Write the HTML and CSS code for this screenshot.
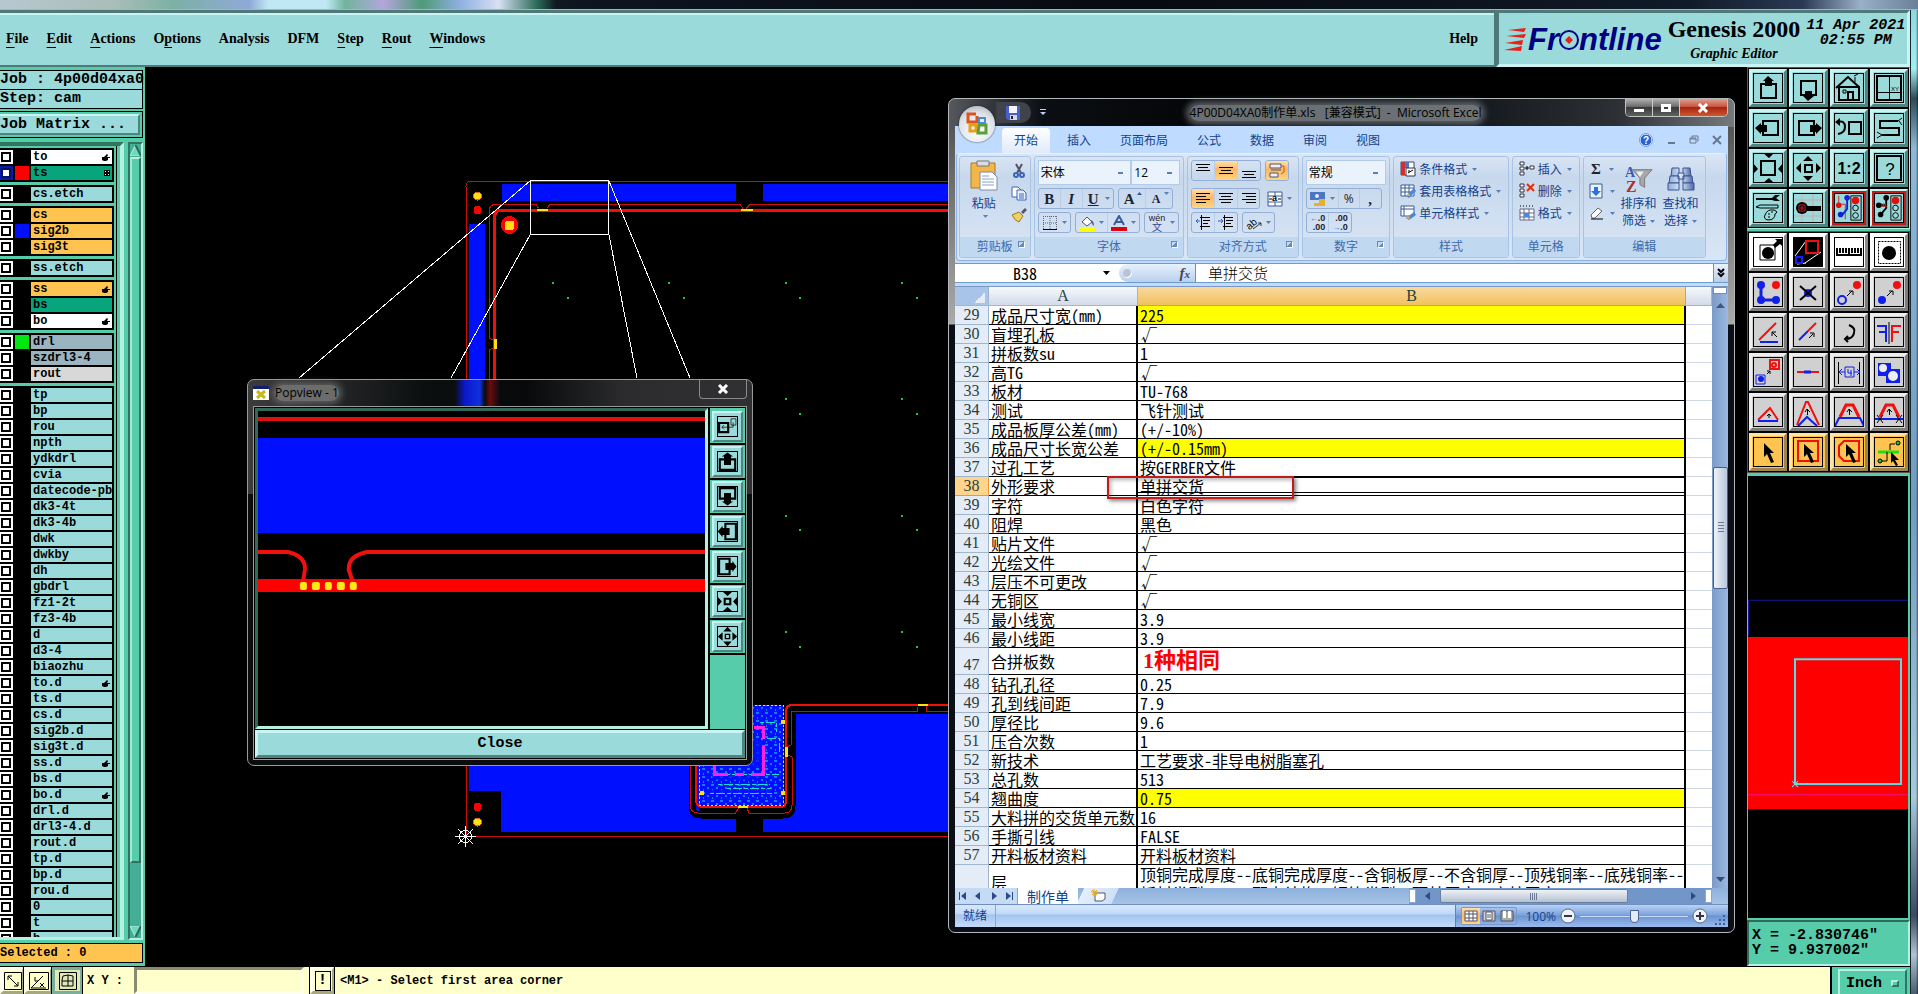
FILE: index.html
```html
<!DOCTYPE html>
<html lang="zh-CN">
<head>
<meta charset="utf-8">
<title>Genesis 2000 Graphic Editor</title>
<link rel="stylesheet" href="styles.css">
</head>
<body>
<svg class="defs" aria-hidden="true">
  <defs>
    <pattern id="dots" width="9" height="8" patternUnits="userSpaceOnUse"><path d="M0 1h3M5 4h2M1 6h1" stroke="#2fe0e8" stroke-width="1"/></pattern>
    <linearGradient id="steel" x1="0" x2="1"><stop offset="0" stop-color="#8fa9d8"/><stop offset=".5" stop-color="#dfe9fa"/><stop offset="1" stop-color="#4a69a8"/></linearGradient>
  </defs>
  <symbol id="hand" viewBox="0 0 8 8"><path d="M0 4h2l3-3 1 1-1 2h3v1H6v2L4 8H2L0 7z"/></symbol>
  <symbol id="up" viewBox="0 0 30 30"><path d="M8 11h15v14H8z" fill="none" stroke="#000" stroke-width="2"/><path d="M15 3l6 5h-2v5h-7V8h-2z"/></symbol>
  <symbol id="down" viewBox="0 0 30 30"><path d="M8 8h15v14H8z" fill="none" stroke="#000" stroke-width="2"/><path d="M15 28l6-5h-2v-5h-7v5h-2z"/></symbol>
  <symbol id="left" viewBox="0 0 30 30"><path d="M10 8h15v14H10z" fill="none" stroke="#000" stroke-width="2"/><path d="M2 15l6-5v2h6v7H8v2z"/></symbol>
  <symbol id="right" viewBox="0 0 30 30"><path d="M6 8h15v14H6z" fill="none" stroke="#000" stroke-width="2"/><path d="M29 15l-6-5v2h-6v7h6v2z"/></symbol>
  <symbol id="in" viewBox="0 0 30 30"><path d="M8 8h14v14H8z" fill="none" stroke="#000" stroke-width="2"/><path d="M10 0h11l-5 5zM10 30h11l-5-5zM0 10v11l5-5zM30 10v11l-5-5z"/></symbol>
  <symbol id="out" viewBox="0 0 30 30"><path d="M12 12h7v7h-7z" fill="none" stroke="#000" stroke-width="2"/><path d="M10 8l5-5 5 5zM10 23l5 5 5-5zM8 10l-5 5 5 5zM23 10l5 5-5 5z"/></symbol>
  <symbol id="cursor" viewBox="0 0 30 30"><path d="M11 6v14l3-3 4 9 3-1-4-9h4z"/></symbol>
  <symbol id="dd" viewBox="0 0 5 3"><path d="M0 0h5L2.500 3z" fill="#5a7fb5"/></symbol>
</svg>
<div class="app">
  <div class="oscap"></div>
  <div class="body">
    <div class="work">
      <header class="head">
        <nav class="menu">
          <a href="#"><u>F</u>ile</a><a href="#"><u>E</u>dit</a><a href="#"><u>A</u>ctions</a><a href="#">O<u>p</u>tions</a><a href="#">Analysis</a><a href="#">DFM</a><a href="#"><u>S</u>tep</a><a href="#"><u>R</u>out</a><a href="#"><u>W</u>indows</a><a href="#" class="help">Help</a>
        </nav>
        <div class="brand">
          <div class="logo">
            <svg width="24" height="24" viewBox="0 0 24 24" fill="#e8201c"><path d="M4 2L22 0l-2 4zM2 8l20-2-2 4zM1 15l18-3-1 5zM0 22l18-4-1 5z"/></svg>
            <span>Fr</span><svg width="20" height="20" viewBox="0 0 20 20"><circle cx="10" cy="10" r="9" fill="none" stroke="#000080" stroke-width="2"/><path d="M10 6l4 4-4 4-4-4z" fill="#e8201c"/></svg><span>ntline</span>
          </div>
          <div class="prod"><strong>Genesis 2000</strong><em>Graphic Editor</em></div>
          <div class="clock">11 Apr 2021<br>02:55 PM</div>
        </div>
      </header>
      <div class="main">
        <aside class="layers">
          <div class="jobbox">Job : 4p00d04xa0</div>
          <div class="jobbox">Step: cam</div>
          <div class="matrix"><button>Job Matrix ...</button></div>
          <div class="lscroll">
            <div class="lwin">
              <ul><li><label><input type="checkbox"><i></i><b class="w">to<svg><use href="#hand"/></svg></b></label></li><li><label><input type="checkbox" class="on"><i class="red"></i><b class="g">ts<svg class="mk" viewBox="0 0 6 6"><path d="M0 0h6v6H0z"/><path d="M1 1h1v1H1zM4 1h1v1H4zM1 4h1v1H1zM4 4h1v1H4z" fill="#fff"/></svg></b></label></li></ul>
              <ul><li><label><input type="checkbox"><i></i><b>cs.etch</b></label></li></ul>
              <ul><li><label><input type="checkbox"><i></i><b class="o">cs</b></label></li><li><label><input type="checkbox"><i class="blue"></i><b class="o">sig2b</b></label></li><li><label><input type="checkbox"><i></i><b class="o">sig3t</b></label></li></ul>
              <ul><li><label><input type="checkbox"><i></i><b>ss.etch</b></label></li></ul>
              <ul><li><label><input type="checkbox"><i></i><b class="o">ss<svg><use href="#hand"/></svg></b></label></li><li><label><input type="checkbox"><i></i><b class="g">bs</b></label></li><li><label><input type="checkbox"><i></i><b class="w">bo<svg><use href="#hand"/></svg></b></label></li></ul>
              <ul><li><label><input type="checkbox"><i class="lime"></i><b class="s">drl</b></label></li><li><label><input type="checkbox"><i></i><b class="s">szdrl3-4</b></label></li><li><label><input type="checkbox"><i></i><b class="l">rout</b></label></li></ul>
              <ul>
                <li><label><input type="checkbox"><i></i><b>tp</b></label></li>
                <li><label><input type="checkbox"><i></i><b>bp</b></label></li>
                <li><label><input type="checkbox"><i></i><b>rou</b></label></li>
                <li><label><input type="checkbox"><i></i><b>npth</b></label></li>
                <li><label><input type="checkbox"><i></i><b>ydkdrl</b></label></li>
                <li><label><input type="checkbox"><i></i><b>cvia</b></label></li>
                <li><label><input type="checkbox"><i></i><b>datecode-pbc</b></label></li>
                <li><label><input type="checkbox"><i></i><b>dk3-4t</b></label></li>
                <li><label><input type="checkbox"><i></i><b>dk3-4b</b></label></li>
                <li><label><input type="checkbox"><i></i><b>dwk</b></label></li>
                <li><label><input type="checkbox"><i></i><b>dwkby</b></label></li>
                <li><label><input type="checkbox"><i></i><b>dh</b></label></li>
                <li><label><input type="checkbox"><i></i><b>gbdrl</b></label></li>
                <li><label><input type="checkbox"><i></i><b>fz1-2t</b></label></li>
                <li><label><input type="checkbox"><i></i><b>fz3-4b</b></label></li>
                <li><label><input type="checkbox"><i></i><b>d</b></label></li>
                <li><label><input type="checkbox"><i></i><b>d3-4</b></label></li>
                <li><label><input type="checkbox"><i></i><b>biaozhu</b></label></li>
                <li><label><input type="checkbox"><i></i><b>to.d<svg><use href="#hand"/></svg></b></label></li>
                <li><label><input type="checkbox"><i></i><b>ts.d</b></label></li>
                <li><label><input type="checkbox"><i></i><b>cs.d</b></label></li>
                <li><label><input type="checkbox"><i></i><b>sig2b.d</b></label></li>
                <li><label><input type="checkbox"><i></i><b>sig3t.d</b></label></li>
                <li><label><input type="checkbox"><i></i><b>ss.d<svg><use href="#hand"/></svg></b></label></li>
                <li><label><input type="checkbox"><i></i><b>bs.d</b></label></li>
                <li><label><input type="checkbox"><i></i><b>bo.d<svg><use href="#hand"/></svg></b></label></li>
                <li><label><input type="checkbox"><i></i><b>drl.d</b></label></li>
                <li><label><input type="checkbox"><i></i><b>drl3-4.d</b></label></li>
                <li><label><input type="checkbox"><i></i><b>rout.d</b></label></li>
                <li><label><input type="checkbox"><i></i><b>tp.d</b></label></li>
                <li><label><input type="checkbox"><i></i><b>bp.d</b></label></li>
                <li><label><input type="checkbox"><i></i><b>rou.d</b></label></li>
                <li><label><input type="checkbox"><i></i><b>0</b></label></li>
                <li><label><input type="checkbox"><i></i><b>t</b></label></li>
                <li><label><input type="checkbox"><i></i><b>h</b></label></li>
              </ul>
            </div>
            <div class="lbar">
              <svg width="11" height="11" viewBox="0 0 11 11"><path d="M5.500 0L11 11H0z" fill="#6fd8bc" stroke="#b5f0e0"/><path d="M5.500 0L11 11" stroke="#2a6655" stroke-width="2"/></svg>
              <div class="lthumb"></div>
              <svg width="11" height="11" viewBox="0 0 11 11"><path d="M5.500 11L11 0H0z" fill="#6fd8bc" stroke="#b5f0e0"/><path d="M5.500 11L11 0" stroke="#2a6655" stroke-width="2"/></svg>
            </div>
          </div>
          <div class="selected">Selected : 0</div>
        </aside>

        <main class="canvas">
          <svg class="pcb" viewBox="145 67 1602 899" preserveAspectRatio="xMinYMin slice">
            <g fill="#0010ff">
              <path d="M502 184h234v17H502zM763 184h240v17H763zM469 224h16v410h-16zM469 700h230v116h37v16H501v-41h-32zM795 714h205v118H763v-16h25q7-2 7-12z"/>
            </g>
            <path d="M692 700v106q0 9 9 9h82q9 0 9-9V711" fill="none" stroke="#000" stroke-width="7"/>
            <g fill="none" stroke="#c81008">
              <path d="M1000 181.500H470q-4 0-4 5V836.500h540"/>
              <path d="M489.500 400v-50l3-2M489.500 210q0-6 8-6h38l3 4M489.500 210v128l3 2M1000 204.500H750l-4 4M547 208l3-3.500h190l3 4"/>
              <path d="M690.500 760v46q0 7 8 7h37l3-5M747 808l2 5h36q7 0 7-8v-48l-4-2M787 747l4-2v-34h126v-4M926 705v6h40"/>
            </g>
            <g fill="none" stroke="#f01008" stroke-width="3">
              <path d="M494.500 400V218q0-8 7-8H1000" stroke-width="3"/>
              <path d="M696 760v40q0 7 8 7h76q6 0 6-7v-88q0-7 6-7h210" stroke-width="2"/>
            </g>
            <path d="M699 705h85v101h-85z" fill="#0010ff"/>
            <path d="M699 705h85v101h-85z" fill="url(#dots)"/>
            <path d="M704 740h60v28h-60zM712 774h48v6h-48zM706 790h66v4h-66z" fill="#0010ff" opacity=".7"/>
            <path d="M715 774h64M718 784h52M710 793h62M760 722h16v10M761 738h18v16M727 788h44" stroke="#18e0d0" fill="none" stroke-dasharray="4 2 9 2"/>
            <path d="M699.500 705v101M783.500 705v101M699 705.500h85M699 805.500h85" stroke="#7ff" stroke-dasharray="2 2"/>
            <path d="M754 727h9v12M763 745v29h-12M714 762v12h14M735 774h9" stroke="#ff20e8" stroke-width="3" fill="none"/>
            <g fill="#ffe010"><path d="M537 209h11v2h-11zM741 209h12v2h-12zM494 339h3v10h-3zM785 747h3v10h-3zM738 806h10v2h-10zM918 704h10v2h-10zM781 720h4v4h-4zM700 791h4v4h-4zM781 791h4v4h-4z"/></g>
            <ellipse cx="509.500" cy="225" rx="8.500" ry="9" fill="#f00"/><rect x="505" y="221" width="9" height="9" rx="2" fill="#ffe010"/>
            <g fill="#ffe010" stroke="#f06010"><circle cx="477.500" cy="196" r="4"/><circle cx="477.500" cy="822" r="4"/></g>
            <g fill="#f00"><circle cx="477.500" cy="210" r="4"/><circle cx="477.500" cy="807" r="4"/></g>
            <g fill="#20c840"><path d="M552 282h2v2h-2zM567 297h2v2h-2zM668 282h2v2h-2zM683 297h2v2h-2zM785 282h2v2h-2zM799 297h2v2h-2zM901 282h2v2h-2zM916 297h2v2h-2zM785 398h2v2h-2zM799 413h2v2h-2zM901 398h2v2h-2zM916 413h2v2h-2zM785 515h2v2h-2zM799 529h2v2h-2zM901 515h2v2h-2zM916 529h2v2h-2zM785 631h2v2h-2zM799 646h2v2h-2zM901 631h2v2h-2zM916 646h2v2h-2z"/></g>
            <path d="M530.500 180.500h78v54h-78zM530 181L299 378M530 235L451 378M609 235l28 143M609 181l81 197" fill="none" stroke="#fff"/>
            <g stroke="#fff" fill="none"><circle cx="465.500" cy="836.500" r="6"/><path d="M455 836.500h21M465.500 826v21M458 829l15 15M473 829l-15 15"/></g>
          </svg>

          <section class="pop">
            <div class="ptitle"><svg width="16" height="14" viewBox="0 0 16 14"><path d="M0 0h16v14H0z" fill="#fff"/><path d="M0 0h16v3H0z" fill="#102070"/><path d="M4 5l8 7M12 5l-8 7" stroke="#c8b820" stroke-width="3"/></svg><span>Popview - 1</span><button aria-label="Close"><svg width="12" height="10" viewBox="0 0 12 10"><path d="M2 1l8 8M10 1L2 9" stroke="#fff" stroke-width="3"/></svg></button></div>
            <div class="pin">
              <div class="prow">
                <div class="pview">
                  <svg viewBox="257 411 448 315" preserveAspectRatio="none"><path d="M257 417h448v4H257z" fill="#e01010"/><path d="M257 438h448v95H257z" fill="#0010ff"/><path d="M257 579h448v13H257z" fill="#f00"/><path d="M257 552h30q18 4 17 18l-2 12M705 552H366q-19 4-18 18l4 12" fill="none" stroke="#f01010" stroke-width="4"/><g fill="#ffe818"><rect x="299" y="582" width="7" height="8" rx="2"/><rect x="311" y="582" width="8" height="8" rx="2"/><rect x="324" y="582" width="7" height="8" rx="2"/><rect x="336" y="582" width="8" height="8" rx="2"/><rect x="349" y="582" width="7" height="8" rx="2"/></g></svg>
                </div>
                <div class="ptools">
                  <button aria-label="Link"><svg viewBox="0 0 30 30"><path d="M3 10h13v13H3z" fill="none" stroke="#000" stroke-width="3"/><path d="M20 4h7v9h-7zM7 16h16v-7M10 13l-3 3 3 3" fill="none" stroke="#000"/></svg></button>
                  <button aria-label="Up"><svg viewBox="0 0 30 30"><path d="M4 12h22v15H4z" fill="none" stroke="#000" stroke-width="3"/><path d="M15 2l8 6h-3v12H10V8H7z"/></svg></button>
                  <button aria-label="Down"><svg viewBox="0 0 30 30"><path d="M4 3h22v15H4z" fill="none" stroke="#000" stroke-width="3"/><path d="M15 28l8-6h-3V10H10v12H7z"/></svg></button>
                  <button aria-label="Left"><svg viewBox="0 0 30 30"><path d="M12 4h15v22H12z" fill="none" stroke="#000" stroke-width="3"/><path d="M1 15l7-8v3h10v10H8v3z"/></svg></button>
                  <button aria-label="Right"><svg viewBox="0 0 30 30"><path d="M3 4h15v22H3z" fill="none" stroke="#000" stroke-width="3"/><path d="M28 15l-6-8v3H12v10h10v3z"/></svg></button>
                  <button aria-label="Zoom in"><svg viewBox="0 0 30 30"><path d="M11 11h8v8h-8z" fill="none" stroke="#000" stroke-width="3"/><path d="M7 0h16l-8 7zM7 30h16l-8-7zM0 7v16l7-8zM30 7v16l-7-8z"/></svg></button>
                  <button aria-label="Zoom out"><svg viewBox="0 0 30 30"><path d="M12 12h6v6h-6z" fill="none" stroke="#000" stroke-width="2"/><path d="M9 8l6-7 6 7zM9 22l6 7 6-7zM8 9l-7 6 7 6zM22 9l7 6-7 6z"/></svg></button>
                </div>
              </div>
              <button class="pclose">Close</button>
            </div>
          </section>

          <section class="xl">
            <div class="xtitle">
              <div class="qat"><svg width="14" height="14" viewBox="0 0 14 14"><path d="M0 0h14v14H2l-2-2z" fill="#4a5fc8"/><path d="M3 0h8v7H3z" fill="#f4f6ff"/><path d="M4 9h7v5H4z" fill="#cfd6ee"/><path d="M5 10h2v3H5z" fill="#223"/></svg></div>
              <svg class="qdd" width="6" height="7" viewBox="0 0 6 7"><path d="M0 0h6v1H0zM0 3h6L3 6z" fill="#b8cdf0"/></svg>
              <h1>4P00D04XA0制作单.xls&nbsp;&nbsp; [兼容模式]&nbsp; -&nbsp; Microsoft Excel</h1>
              <div class="wbtn"><button aria-label="Minimize"><svg width="12" height="10" viewBox="0 0 12 10"><path d="M1 6h10v3H1z" fill="#fff"/></svg></button><button aria-label="Maximize"><svg width="12" height="10" viewBox="0 0 12 10"><path d="M1 1h10v8H1zM4 4v2h4V4z" fill="#fff" fill-rule="evenodd"/></svg></button><button class="x" aria-label="Close"><svg width="12" height="10" viewBox="0 0 12 10"><path d="M2 1l8 8M10 1L2 9" stroke="#fff" stroke-width="3"/></svg></button></div>
            </div>
            <button class="orb" aria-label="Office"><svg width="22" height="24" viewBox="0 0 22 24" fill="none" stroke-width="3"><path d="M11 4v6H2V2h8" stroke="#e0521c"/><path d="M13 6h6v5h-6z" stroke="#4a90d0" stroke-width="2"/><path d="M4 13h6v6H4z" stroke="#e8a018"/><path d="M13 13h7v8h-8z" stroke="#5aa038"/></svg></button>
            <div class="xin">
              <nav class="tabs"><a href="#" class="act">开始</a><a href="#">插入</a><a href="#">页面布局</a><a href="#">公式</a><a href="#">数据</a><a href="#">审阅</a><a href="#">视图</a>
                <span class="mdi"><svg width="14" height="14" viewBox="0 0 14 14"><circle cx="7" cy="7" r="6" fill="#2a62d8" stroke="#fff"/><circle cx="7" cy="7" r="6.500" fill="none" stroke="#7a9ad8"/><text x="4" y="11" font-size="10" font-weight="bold" fill="#fff" font-family="Liberation Sans">?</text></svg><svg width="10" height="10" viewBox="0 0 10 10"><path d="M2 7h7v2H2z" fill="#68788f"/></svg><svg width="10" height="10" viewBox="0 0 10 10" fill="none" stroke="#68788f"><path d="M3 3V1h6v5H8M1 3h6v5H1zM1 4h6"/></svg><svg width="10" height="10" viewBox="0 0 10 10"><path d="M1 1l8 8M9 1L1 9" stroke="#68788f" stroke-width="2"/></svg></span>
              </nav>
              <div class="ribbon">
                <div class="grp"><div class="gb clip">
                  <button class="big"><svg width="28" height="32" viewBox="0 0 28 32"><path d="M1 3h24v25H1z" fill="#f2b64a" stroke="#b07a20"/><path d="M7 1h12v5H7z" fill="#d8dce4" stroke="#777"/><path d="M10 12h12l5 5v13H10z" fill="#fff" stroke="#7a8aa8"/><path d="M12 19h12M12 22h12M12 25h12M12 16h7" stroke="#8aa0c8"/></svg>粘贴<svg class="dd"><use href="#dd"/></svg></button>
                  <div class="col"><svg viewBox="0 0 16 16"><path d="M5 1l5 9M11 1L6 10" stroke="#556" stroke-width="2"/><g fill="none" stroke="#3a66b8" stroke-width="2"><circle cx="5" cy="12" r="2"/><circle cx="11" cy="12" r="2"/></g></svg><svg viewBox="0 0 16 16"><path d="M1 2h6l3 3v7H1z" fill="#fff" stroke="#3a66b8"/><path d="M6 5h6l3 3v7H6z" fill="#e8f0ff" stroke="#3a66b8"/><path d="M8 9h5M8 11h5M8 13h5" stroke="#3a66b8"/></svg><svg viewBox="0 0 16 16"><path d="M10 5l4-4 2 2-4 4z" fill="#556"/><path d="M1 8l7-3 4 4-4 6q-4-1-7-7z" fill="#f0d060" stroke="#a07820"/></svg></div>
                </div><div class="gl">剪贴板<span class="lx"></span></div></div>
                <div class="grp"><div class="gb rows">
                  <div class="r"><select class="f1" aria-label="字体"><option>宋体</option></select><select class="f2" aria-label="字号"><option>12</option></select></div>
                  <div class="r"><span class="bs"><button><b class="t">B</b></button><button><i class="t">I</i></button><button><u class="t">U</u><svg class="dd"><use href="#dd"/></svg></button></span><span class="bs"><button><b class="t a">A</b><svg class="sup" viewBox="0 0 5 3"><path d="M0 3h5L2.500 0z" fill="#2a5ab8"/></svg></button><button><b class="t b">A</b><svg class="sup"><use href="#dd"/></svg></button></span></div>
                  <div class="r"><span class="bs"><button><svg viewBox="0 0 16 16"><path d="M1 1.500h14M1 8h14M1.500 1v13M8 1v13M14.500 1v13" stroke="#667" stroke-dasharray="1 1"/><path d="M1 14h14v1H1z"/></svg><svg class="dd"><use href="#dd"/></svg></button></span><span class="bs"><button><svg viewBox="0 0 16 16"><path d="M3 7l5-5 5 5-5 4z" fill="#fff" stroke="#556"/><path d="M12 5q3 1 3 6l-2-2z" fill="#3a66b8"/><path d="M0 12h16v4H0z" fill="#ff0"/></svg><svg class="dd"><use href="#dd"/></svg></button><button><svg viewBox="0 0 16 16"><path d="M3 10L8 1l5 9M5 7h6" fill="none" stroke="#3a5a9a" stroke-width="2"/><path d="M0 12h16v4H0z" fill="#e00010"/></svg><svg class="dd"><use href="#dd"/></svg></button></span><span class="bs"><button><svg class="wen" viewBox="0 0 18 18" text-anchor="middle" fill="#223"><text x="9" y="7" font-size="9" font-family="Liberation Sans">wén</text><text x="9" y="17" font-size="10" font-family="Noto Sans CJK SC" fill="#2a4a9a">文</text></svg><svg class="dd"><use href="#dd"/></svg></button></span></div>
                </div><div class="gl">字体<span class="lx"></span></div></div>
                <div class="grp"><div class="gb rows">
                  <div class="r"><span class="bs"><button><svg viewBox="0 0 16 16"><path d="M1 1h14v1H1zM3 4h10v1H3zM1 7h14v1H1z"/></svg></button><button class="hot"><svg viewBox="0 0 16 16"><path d="M1 4h14v1H1zM3 7h10v1H3zM1 10h14v1H1z"/></svg></button><button><svg viewBox="0 0 16 16"><path d="M1 8h14v1H1zM3 11h10v1H3zM1 14h14v1H1z"/></svg></button></span><span class="bs"><button class="hot"><svg viewBox="0 0 16 16"><path d="M1 1h11v4H1zM1 10h8v4H1z" fill="#eef" stroke="#556"/><path d="M2 7h10" stroke="#556"/><path d="M12 3h3v6l-3 2" fill="none" stroke="#c06010"/></svg></button></span></div>
                  <div class="r"><span class="bs"><button class="hot"><svg viewBox="0 0 16 16"><path d="M1 2h14v1H1zM1 5h10v1H1zM1 8h14v1H1zM1 11h10v1H1z"/></svg></button><button><svg viewBox="0 0 16 16"><path d="M1 2h14v1H1zM3 5h10v1H3zM1 8h14v1H1zM3 11h10v1H3z"/></svg></button><button><svg viewBox="0 0 16 16"><path d="M1 2h14v1H1zM5 5h10v1H5zM1 8h14v1H1zM5 11h10v1H5z"/></svg></button></span><button class="pl"><svg viewBox="0 0 16 16"><path d="M1 1h14v14H1zM8 1v4M8 11v4M1 5h14M1 11h14" fill="#fff" stroke="#3a5a9a"/><path d="M2 8h3M11 8h3" stroke="#000"/><text x="5" y="10" font-size="9" font-weight="bold" font-family="Liberation Sans">a</text></svg><svg class="dd"><use href="#dd"/></svg></button></div>
                  <div class="r"><span class="bs"><button><svg viewBox="0 0 16 16"><path d="M5 2h10v1H5zM8 5h7v1H8zM8 8h5v1H8zM5 11h10v1H5zM6 0h1v15H6z"/><path d="M5 6H1M3 4L1 6l2 2" stroke="#2a62d8" fill="none"/></svg></button><button><svg viewBox="0 0 16 16"><path d="M5 2h10v1H5zM8 5h7v1H8zM8 8h5v1H8zM5 11h10v1H5zM6 0h1v15H6z"/><path d="M0 6h4M3 4l2 2-2 2" stroke="#2a62d8" fill="none"/></svg></button></span><span class="bs"><button><svg viewBox="0 0 16 16"><text x="0" y="12" font-size="10" font-family="Liberation Sans" transform="rotate(-40 6 9)">ab</text><path d="M7 14l8-6M15 8l-3 0M15 8v3" stroke="#333" fill="none"/></svg><svg class="dd"><use href="#dd"/></svg></button></span></div>
                </div><div class="gl">对齐方式<span class="lx"></span></div></div>
                <div class="grp"><div class="gb rows">
                  <div class="r"><select class="f1" aria-label="数字格式"><option>常规</option></select></div>
                  <div class="r"><span class="bs"><button><svg viewBox="0 0 16 16"><path d="M0 1h15v8H0z" fill="#4a78c0"/><circle cx="7" cy="5" r="2" fill="#dce8ff"/><path d="M9 8h6v7H9zM4 12h5v3H4z" fill="#e8b030"/></svg><svg class="dd"><use href="#dd"/></svg></button><button><span class="sm">%</span></button><button><b class="t">,</b></button></span></div>
                  <div class="r"><span class="bs"><button><span class="dec"><i>←</i>.0<br>.00</span></button><button><span class="dec">.00<br><i>→</i>.0</span></button></span></div>
                </div><div class="gl">数字<span class="lx"></span></div></div>
                <div class="grp"><div class="gb list">
                  <button><svg viewBox="0 0 16 16"><path d="M1 1h13v13H1z" fill="#fff" stroke="#446"/><path d="M1 1h4v13H1z" fill="#d03030"/><path d="M5 1h4v6H5z" fill="#4a78c0"/><path d="M6 7h9v8H6z" fill="#fff" stroke="#334"/><path d="M8 12l5-3M8 10h2" stroke="#000"/></svg>条件格式<svg class="dd"><use href="#dd"/></svg></button>
                  <button><svg viewBox="0 0 16 16"><path d="M1 2h13v11H1zM1 5h13M1 9h13M5 2v11M9 2v11" fill="#fff" stroke="#3a5a9a"/><path d="M6 13l8-8 2 3-7 7z" fill="#4a88d8"/><path d="M6 13l3-3 1 3z" fill="#e8b030"/></svg>套用表格格式<svg class="dd"><use href="#dd"/></svg></button>
                  <button><svg viewBox="0 0 16 16"><path d="M1 1h13v10H1zM1 4h13M4 1v10" fill="#fff" stroke="#3a5a9a"/><path d="M6 13l8-6 2 3-7 5z" fill="#4a88d8"/><path d="M5 13l4-2 1 3z" fill="#e8b030"/></svg>单元格样式<svg class="dd"><use href="#dd"/></svg></button>
                </div><div class="gl">样式</div></div>
                <div class="grp"><div class="gb list">
                  <button><svg viewBox="0 0 16 16"><path d="M1 1h4v3H1zM1 6h4v3H1zM1 11h4v3H1zM11 5h4v3h-4z" fill="#fff" stroke="#334"/><path d="M6 7h4M8 5v4" stroke="#000"/></svg>插入<svg class="dd"><use href="#dd"/></svg></button>
                  <button><svg viewBox="0 0 16 16"><path d="M1 1h4v3H1zM1 6h4v3H1zM1 11h4v3H1z" fill="#fff" stroke="#334"/><path d="M8 1l7 7M15 1L8 8" stroke="#e03010" stroke-width="2"/></svg>删除<svg class="dd"><use href="#dd"/></svg></button>
                  <button><svg viewBox="0 0 16 16"><path d="M1 4h14v11H1zM1 8h14M1 12h14M5 4v11M10 4v11" fill="#fff" stroke="#668"/><path d="M5 8h5v4H5z" fill="#4a88d8"/><path d="M1 1h14" stroke="#000" stroke-dasharray="1 2"/></svg>格式<svg class="dd"><use href="#dd"/></svg></button>
                </div><div class="gl">单元格</div></div>
                <div class="grp"><div class="gb edit">
                  <div class="list"><button><b class="t">Σ</b><svg class="dd"><use href="#dd"/></svg></button><button><svg viewBox="0 0 16 16"><path d="M1 1h12v14H1z" fill="#eaf2ff" stroke="#3a5a9a"/><path d="M5 4h4v4h3l-5 5-5-5h3z" fill="#2a72e0"/></svg><svg class="dd"><use href="#dd"/></svg></button><button><svg viewBox="0 0 16 16"><path d="M2 10l7-7 4 3-7 7H3z" fill="#fff" stroke="#667"/><path d="M2 14h12" stroke="#000"/></svg><svg class="dd"><use href="#dd"/></svg></button></div>
                  <button class="big"><svg viewBox="0 0 30 30"><text x="0" y="13" font-size="15" font-family="Liberation Serif" font-weight="bold" fill="#3a5ab8">A</text><text x="1" y="29" font-size="17" font-family="Liberation Serif" font-weight="bold" fill="#b03030">Z</text><path d="M8 5h21l-8 9v10l-5-3v-7z" fill="#a8a8a8" stroke="#777"/><path d="M12 7h8l-4 6z" fill="#eee"/></svg>排序和<br>筛选<svg class="dd"><use href="#dd"/></svg></button>
                  <button class="big"><svg viewBox="0 0 28 30" fill="url(#steel)" stroke="#3a5590"><path d="M5 4h7v8H4zM16 4h7l1 8h-8z"/><path d="M3 12h9v7H2zM16 12h9l1 7H16zM11 9h6v6h-6z"/><path d="M1 19h11v7H1zM16 19h11v7H16z"/></svg>查找和<br>选择<svg class="dd"><use href="#dd"/></svg></button>
                </div><div class="gl">编辑</div></div>
              </div>
              <div class="fbar"><span class="nbox">B38</span><svg class="ndd" width="7" height="4" viewBox="0 0 7 4"><path d="M0 0h7L3.500 4z"/></svg><span class="fx"><i></i><em>f<sub>x</sub></em></span><input class="fin" value="单拼交货" aria-label="编辑栏"><button class="fexp" aria-label="展开"><svg width="8" height="10" viewBox="0 0 8 10" fill="none" stroke="#000" stroke-width="2"><path d="M1 1l3 3 3-3M1 5l3 3 3-3"/></svg></button></div>
              <div class="sheet">
                <div class="grid">
                  <table>
                    <colgroup><col class="c0"><col class="c1"><col><col class="c3"></colgroup>
                    <thead><tr><th class="cor"></th><th>A</th><th class="sel">B</th><th></th></tr></thead>
                    <tbody>
                      <tr><th>29</th><td>成品尺寸宽(mm)</td><td class="y">225</td><td></td></tr>
                      <tr><th>30</th><td>盲埋孔板</td><td class="ck">√</td><td></td></tr>
                      <tr><th>31</th><td>拼板数su</td><td>1</td><td></td></tr>
                      <tr><th>32</th><td>高TG</td><td class="ck">√</td><td></td></tr>
                      <tr><th>33</th><td>板材</td><td>TU-768</td><td></td></tr>
                      <tr><th>34</th><td>测试</td><td>飞针测试</td><td></td></tr>
                      <tr><th>35</th><td>成品板厚公差(mm)</td><td>(+/-10%)</td><td></td></tr>
                      <tr><th>36</th><td>成品尺寸长宽公差</td><td class="y">(+/-0.15mm)</td><td></td></tr>
                      <tr><th>37</th><td>过孔工艺</td><td>按GERBER文件</td><td></td></tr>
                      <tr class="cur"><th>38</th><td>外形要求</td><td>单拼交货</td><td></td></tr>
                      <tr><th>39</th><td>字符</td><td>白色字符</td><td></td></tr>
                      <tr><th>40</th><td>阻焊</td><td>黑色</td><td></td></tr>
                      <tr><th>41</th><td>贴片文件</td><td class="ck">√</td><td></td></tr>
                      <tr><th>42</th><td>光绘文件</td><td class="ck">√</td><td></td></tr>
                      <tr><th>43</th><td>层压不可更改</td><td class="ck">√</td><td></td></tr>
                      <tr><th>44</th><td>无铜区</td><td class="ck">√</td><td></td></tr>
                      <tr><th>45</th><td>最小线宽</td><td>3.9</td><td></td></tr>
                      <tr><th>46</th><td>最小线距</td><td>3.9</td><td></td></tr>
                      <tr class="tall"><th>47</th><td>合拼板数</td><td class="big1">1种相同</td><td></td></tr>
                      <tr><th>48</th><td>钻孔孔径</td><td>0.25</td><td></td></tr>
                      <tr><th>49</th><td>孔到线间距</td><td>7.9</td><td></td></tr>
                      <tr><th>50</th><td>厚径比</td><td>9.6</td><td></td></tr>
                      <tr><th>51</th><td>压合次数</td><td>1</td><td></td></tr>
                      <tr><th>52</th><td>新技术</td><td>工艺要求-非导电树脂塞孔</td><td></td></tr>
                      <tr><th>53</th><td>总孔数</td><td>513</td><td></td></tr>
                      <tr><th>54</th><td>翘曲度</td><td class="y">0.75</td><td></td></tr>
                      <tr><th>55</th><td>大料拼的交货单元数</td><td>16</td><td></td></tr>
                      <tr><th>56</th><td>手撕引线</td><td>FALSE</td><td></td></tr>
                      <tr><th>57</th><td>开料板材资料</td><td>开料板材资料</td><td></td></tr>
                      <tr class="last"><th></th><td>层</td><td>顶铜完成厚度--底铜完成厚度--含铜板厚--不含铜厚--顶残铜率--底残铜率--<br>板材类型------配本结构--铜箔类型--顶基厚度--底基厚度</td><td></td></tr>
                    </tbody>
                  </table>
                </div>
                <div class="vs"><i class="split"></i><svg width="9" height="5" viewBox="0 0 9 5"><path d="M0 5h9L4.500 0z" fill="#46567a"/></svg><div class="vt"></div><svg width="9" height="5" viewBox="0 0 9 5"><path d="M0 0h9L4.500 5z" fill="#3a4a70"/></svg></div>
              </div>
              <div class="stabs">
                <span class="nav"><svg viewBox="0 0 8 8"><path d="M0 0h1v8H0zM7 0v8L2 4z"/></svg><svg viewBox="0 0 8 8"><path d="M6 0v8L1 4z"/></svg><svg viewBox="0 0 8 8"><path d="M2 0v8l5-4z"/></svg><svg viewBox="0 0 8 8"><path d="M7 0h1v8H7zM1 0v8l5-4z"/></svg></span>
                <a href="#" class="st">制作单</a><span class="nt"><svg width="16" height="14" viewBox="0 0 16 14"><path d="M4 4h10v6l-3 2H4z" fill="#fff" stroke="#556"/><path d="M3 0v7M0 3h7M1 1l5 5M6 1L1 6" stroke="#e8a820"/></svg></span>
                <span class="hs"><i class="hh"></i><svg viewBox="0 0 8 8"><path d="M6 0v8L1 4z"/></svg><i class="ht"><i></i></i><svg viewBox="0 0 8 8"><path d="M2 0v8l5-4z"/></svg><i class="hh"></i></span>
              </div>
              <div class="status"><span class="rdy">就绪</span><div class="sr"><span class="vb"><button class="hot" aria-label="普通"><svg viewBox="0 0 14 12"><path d="M1 1h12v10H1zM1 4h12M1 8h12M5 1v10M9 1v10" fill="#fff" stroke="#556"/></svg></button><button aria-label="页面布局"><svg viewBox="0 0 14 12"><path d="M1 1h12v10H1z" fill="#ccc" stroke="#556"/><path d="M4 2h6v8H4zM5 5h4M5 7h4" fill="#fff" stroke="#556"/></svg></button><button aria-label="分页预览"><svg viewBox="0 0 14 12"><path d="M1 1h12v10H1z" fill="#aaa" stroke="#556"/><path d="M3 1h3v7H3zM8 1h3v7H8z" fill="#fff"/></svg></button></span><span>100%</span><svg class="zb" viewBox="0 0 16 16"><circle cx="8" cy="8" r="7" fill="#eef3fb" stroke="#556a90"/><path d="M4 7h8v2H4z" fill="#334"/></svg><input type="range" min="0" max="100" value="50" aria-label="缩放"><svg class="zb" viewBox="0 0 16 16"><circle cx="8" cy="8" r="7" fill="#eef3fb" stroke="#556a90"/><path d="M4 7h8v2H4zM7 4h2v8H7z" fill="#334"/></svg><svg class="grip" viewBox="0 0 12 12" fill="#3f5f9a"><path d="M9 0h2v2H9zM5 4h2v2H5zM9 4h2v2H9zM1 8h2v2H1zM5 8h2v2H5zM9 8h2v2H9z"/></svg></div></div>
            </div>
            <div class="mark"></div>
          </section>
        </main>

        <aside class="tools">
          <div class="tg teal">
            <button aria-label="Up"><svg><use href="#up"/></svg></button><button aria-label="Down"><svg><use href="#down"/></svg></button>
            <button aria-label="Home"><svg viewBox="0 0 30 30" fill="none" stroke="#000" stroke-width="2"><path d="M2 15L14 4l11 10M5 14h20v13H5zM14 27v-8h5v8" stroke-width="2"/><path d="M9 17h3v3H9zM21 9V4M20 3l4-2" stroke-width="1"/></svg></button>
            <button aria-label="Coordinates"><svg viewBox="0 0 30 30"><path d="M3 3h24v24H3z" fill="none" stroke="#000" stroke-width="2"/><path d="M15.500 3v24M3 19.500h24" stroke="#000"/><text x="17" y="18" font-size="6" font-family="Liberation Sans">XY</text></svg></button>
            <button aria-label="Left"><svg><use href="#left"/></svg></button><button aria-label="Right"><svg><use href="#right"/></svg></button>
            <button aria-label="Previous"><svg viewBox="0 0 30 30" fill="none" stroke="#000" stroke-width="2"><path d="M15 9h12v12H15zM4 9q7-2 7 5 0 6-7 7" /><path d="M1 9l5-4v8z" fill="#000" stroke="none"/></svg></button>
            <button aria-label="Snake"><svg viewBox="0 0 30 30" fill="none" stroke="#000"><path d="M24 8H6v7h19v7H8" stroke-width="2"/><path d="M24 8l4-3M25 8l3 4M8 22l-5-3M8 22l-5 3"/></svg></button>
            <button aria-label="Zoom in"><svg><use href="#in"/></svg></button><button aria-label="Zoom out"><svg><use href="#out"/></svg></button>
            <button aria-label="Scale"><svg viewBox="0 0 30 30"><text x="15" y="21" text-anchor="middle" font-size="16" font-weight="bold" font-family="Liberation Sans">1:2</text></svg></button>
            <button aria-label="Query"><svg viewBox="0 0 30 30"><path d="M3 3h24v24H3z" fill="none" stroke="#000" stroke-width="2"/><text x="16" y="22" text-anchor="middle" font-size="17" font-family="Liberation Sans">?</text></svg></button>
            <button aria-label="Options"><svg viewBox="0 0 30 30"><path d="M3 5h16l3-3h5l-4 3 4 3h-5l-3-1H3z"/><path d="M3 14l4-2h18v3H7z" fill="none" stroke="#000"/><path d="M12 22q2-6 9-5 5 2 1 4 0 6-7 6-5-1-3-5zM15 21h2M18 19h2M15 24h2" fill="none" stroke="#000"/></svg></button>
            <button aria-label="Pad"><svg viewBox="0 0 30 30"><path d="M9 1v28M20 1v28M1 7h28M1 23h28" stroke="#caa"/><circle cx="9" cy="15" r="6"/><path d="M9 13h19v5H9z"/><path d="M6 12h6v6H6zM8 14h2v2H8z" fill="none" stroke="#c02020"/></svg></button>
            <button class="rd" aria-label="Net"><svg viewBox="0 0 30 30"><path d="M4 2v9h7v16" fill="none" stroke="#d02020"/><path d="M13 4v12l-5 6" fill="none" stroke="#1020e0" stroke-width="2"/><circle cx="4" cy="12" r="3" fill="#e01010"/><circle cx="13" cy="4" r="3" fill="#1020e0"/><circle cx="6" cy="22" r="3" fill="#1020e0"/><path d="M17 2h11v26H17z" fill="none" stroke="#000"/><circle cx="22" cy="7" r="4" fill="#e01010"/><circle cx="22" cy="15" r="3" fill="none" stroke="#000"/><circle cx="22" cy="23" r="3" fill="none" stroke="#000"/></svg></button>
            <button class="rd" aria-label="DRC"><svg viewBox="0 0 30 30"><path d="M4 12h7M12 4v11l-6 7" fill="none" stroke="#000" stroke-width="2"/><path d="M7 13h6M7 10v3M9 10v3M11 10v3" stroke="#d02020"/><circle cx="4" cy="12" r="3"/><circle cx="12" cy="4" r="3"/><circle cx="6" cy="22" r="3"/><path d="M17 2h11v26H17z" fill="none" stroke="#000"/><circle cx="22" cy="7" r="4" fill="#e01010"/><circle cx="22" cy="15" r="3" fill="none" stroke="#000"/><circle cx="22" cy="23" r="3" fill="none" stroke="#000"/></svg></button>
          </div>
          <div class="tg grey">
            <button class="wh" aria-label="Move"><svg viewBox="0 0 30 30"><path d="M7 8h15v15H7z" fill="none" stroke="#000"/><circle cx="15" cy="16" r="6"/><path d="M20 8l4-4-2-2h7v7l-2-2-5 4z"/></svg></button>
            <button class="wh" aria-label="Popview"><svg viewBox="0 0 30 30"><path d="M1 1h28v28H1z"/><path d="M2 19L13 4M4 27l9-1M12 26l16-11" stroke="#fff"/><path d="M13 4h12v12H13z" fill="none" stroke="#e81010" stroke-width="2"/><path d="M3 20h6v6H3z" fill="none" stroke="#1020ff" stroke-width="2"/></svg></button>
            <button class="wh" aria-label="Measure"><svg viewBox="0 0 30 30"><path d="M3 18V11M6 11v5M9 11v5M12 11v5M15 11v7M18 11v5M21 11v5M24 11v5M27 11v7M2 18h26" stroke="#000" stroke-width="2" fill="none"/></svg></button>
            <button class="wh" aria-label="Select"><svg viewBox="0 0 30 30"><path d="M4.500 4.500h22v22h-22z" fill="none" stroke="#000" stroke-dasharray="2 1"/><circle cx="15" cy="16" r="7"/></svg></button>
            <button aria-label="Chain"><svg viewBox="0 0 30 30" fill="#1020e8"><path d="M8 8v15h15" fill="none" stroke="#1020e8" stroke-width="3"/><circle cx="8" cy="8" r="4"/><circle cx="8" cy="23" r="4"/><circle cx="23" cy="23" r="4"/><circle cx="23" cy="8" r="4" fill="#f01010"/></svg></button>
            <button aria-label="Delete"><svg viewBox="0 0 30 30"><circle cx="15" cy="16" r="4" fill="#1020e8"/><path d="M7 9l16 14M23 9L7 23" stroke="#000" stroke-width="2"/></svg></button>
            <button aria-label="Copy"><svg viewBox="0 0 30 30"><circle cx="8" cy="23" r="4" fill="none" stroke="#1020e8" stroke-width="2"/><circle cx="23" cy="8" r="4" fill="#f01010"/><path d="M13 19l5-5M15 14h4v4" fill="none" stroke="#000"/></svg></button>
            <button aria-label="Move point"><svg viewBox="0 0 30 30"><circle cx="8" cy="23" r="4" fill="#1020e8"/><circle cx="23" cy="8" r="4" fill="#f01010"/><path d="M13 19l5-5M15 14h4v4" fill="none" stroke="#000"/></svg></button>
            <button aria-label="Angle"><svg viewBox="0 0 30 30" fill="none"><path d="M6 23L23 6" stroke="#f01010" stroke-width="2"/><path d="M7 25h18" stroke="#1020e8" stroke-width="2"/><path d="M24 20l-5-5M19 19v-4h4" stroke="#000"/></svg></button>
            <button aria-label="Extend"><svg viewBox="0 0 30 30" fill="none"><path d="M15 14l8-8" stroke="#f01010" stroke-width="2"/><path d="M6 23l9-9" stroke="#1020e8" stroke-width="2"/><path d="M16 21l4-4M17 16h4v4" stroke="#000"/></svg></button>
            <button aria-label="Rotate"><svg viewBox="0 0 30 30" fill="none" stroke="#000"><path d="M15 8q7 3 5 8-1 6-9 6M14 19l-3 3 3 3" stroke-width="2"/></svg></button>
            <button aria-label="Mirror"><svg viewBox="0 0 30 30" fill="none" stroke-width="2"><path d="M3 9h9v16M5 15h7" stroke="#1020e8"/><path d="M27 9h-9v16M25 15h-7" stroke="#f01010"/><path d="M15 5v22" stroke="#000" stroke-width="1"/></svg></button>
            <button aria-label="Stretch"><svg viewBox="0 0 30 30" fill="none"><path d="M17 3h9v9h-9z" stroke="#f01010" stroke-width="2"/><circle cx="21" cy="8" r="2" stroke="#f01010" stroke-width="2"/><path d="M3 18h9v9H3z" stroke="#1020e8"/><circle cx="8" cy="22" r="3" fill="#1020e8"/><path d="M14 17l3-3M14 14h3v3" stroke="#000"/></svg></button>
            <button aria-label="Break"><svg viewBox="0 0 30 30"><path d="M4 15h22" stroke="#f01010" stroke-width="2"/><path d="M11 15h7" stroke="#1020e8" stroke-width="3"/></svg></button>
            <button aria-label="Dimension"><svg viewBox="0 0 30 30" fill="none" stroke="#1020e8"><path d="M4.500 5v22M25.500 5v22" stroke="#000"/><path d="M11 10h9v10h-9zM5 15h6M20 15h5M8 12l-3 3 3 3M23 12l3 3-3 3M14 12v4h4M17 13v6"/></svg></button>
            <button aria-label="Merge"><svg viewBox="0 0 30 30"><path d="M4 6h13v6h9v14H12v-7H4z" fill="#1020e8"/><g fill="#eee"><circle cx="9" cy="11" r="4"/><circle cx="19" cy="19" r="5"/></g></svg></button>
            <button aria-label="Triangle"><svg viewBox="0 0 30 30" fill="none" stroke-width="2"><path d="M5 23L17 11l8 12" stroke="#f01010"/><path d="M5 24h20" stroke="#1020e8"/><path d="M16 21v-4M14 19l2-2 2 2" stroke="#000" stroke-width="1"/></svg></button>
            <button aria-label="Peak"><svg viewBox="0 0 30 30" fill="none" stroke-width="2"><path d="M4 28L13 5h2l11 23" stroke="#f01010"/><path d="M5 29l9-9 10 9" stroke="#1020e8"/><path d="M14.500 18v-6M12 15l2-3 3 3" stroke="#000" stroke-width="1"/></svg></button>
            <button aria-label="Arch"><svg viewBox="0 0 30 30" fill="none" stroke-width="2"><path d="M6 20L12 8h7l6 12" stroke="#f01010" stroke-width="3"/><path d="M1 29l4-8h21l4 8" stroke="#1020e8"/><path d="M15.500 18v-6M13 15l2-3 3 3" stroke="#000" stroke-width="1"/></svg></button>
            <button aria-label="Trim"><svg viewBox="0 0 30 30" fill="none" stroke-width="2"><path d="M6 20L12 8h7l6 12" stroke="#f01010" stroke-width="3"/><path d="M1 22h28" stroke="#1020e8"/><path d="M15.500 18v-6M13 15l2-3 3 3M3 18l6 8M9 18l-6 8M22 18l6 8M28 18l-6 8" stroke="#000" stroke-width="1"/></svg></button>
            <button class="or" aria-label="Pick"><svg><use href="#cursor"/></svg></button>
            <button class="or" aria-label="Pick rectangle"><svg viewBox="0 0 30 30"><path d="M5 4h20v20H5z" fill="none" stroke="#f01010" stroke-width="2"/><path d="M11 7v13l3-3 4 9 3-1-4-9h4z"/></svg></button>
            <button class="or" aria-label="Pick polygon"><svg viewBox="0 0 30 30"><path d="M10 4h15v20H10l-5-5V9z" fill="none" stroke="#f01010" stroke-width="2"/><path d="M12 7v13l3-3 4 9 3-1-4-9h4z"/></svg></button>
            <button class="or" aria-label="Pick net"><svg viewBox="0 0 30 30"><path d="M4 15h21" stroke="#20e010" stroke-width="3"/><path d="M8 24h5v-9M16 13V7h5" fill="none" stroke="#000"/><g fill="#20c820" stroke="#000"><circle cx="6" cy="24" r="2"/><circle cx="24" cy="6" r="2"/></g><path d="M17 15v11l2-2 3 5 2-1-3-5h4z"/></svg></button>
          </div>
          <div class="mini"><svg viewBox="1748 479 160 439" preserveAspectRatio="none"><path d="M1748 602.500h160M1748.500 602v36" stroke="#1018a0" fill="none"/><path d="M1748 639h160v171h-160z" fill="#f00"/><path d="M1748 795.500h160" stroke="#f0108c"/><path d="M1795 661h106v124h-106z" fill="none" stroke="#60d8e8" stroke-width="2"/><path d="M1792 782l6 6M1798 782l-6 6" stroke="#60d8e8"/></svg></div>
          <div class="xy">X = -2.830746"<br>Y = 9.937002"</div>
        </aside>
      </div>
      <footer class="foot">
        <button class="fb" aria-label="Line"><svg width="18" height="18" viewBox="0 0 18 18" fill="none" stroke="#000"><path d="M.500.500h17v17H.500zM4 4l10 10M4 8V4h4M14 10v4h-4"/></svg></button>
        <button class="fb" aria-label="Angle"><svg width="20" height="18" viewBox="0 0 20 18" fill="none" stroke="#000"><path d="M.500.500h19v17H.500zM2 16L14 4M2 16h15M6 5v4h3M15 11l-4 4M11 11l4 4"/></svg></button>
        <button class="fb act" aria-label="Grid"><svg width="18" height="18" viewBox="0 0 18 18" fill="none" stroke="#000"><path d="M.500.500h17v17H.500zM4 4q5-2 10 0v10H3V8zM9 3v11M3 9h11"/></svg></button>
        <label for="xy">X Y :</label><input id="xy" type="text">
        <button class="fb bang"><span>!</span></button>
        <span class="msg">&lt;M1&gt; - Select first area corner</span>
        <div class="unit"><button>Inch<i></i></button></div>
      </footer>
    </div>
    <div class="edge"></div>
  </div>
</div>
</body>
</html>
```
FILE: styles.css
```css
* { box-sizing: border-box; }
html, body { height: 100%; margin: 0; }
body { overflow: hidden; background: #000; font-family: "Open Sans", "Noto Sans CJK SC", sans-serif; font-size: 12px; color: #000; }
button, input, select { font: inherit; color: inherit; margin: 0; padding: 0; border-radius: 0; }
button { background: none; border: 0; }
a { color: inherit; text-decoration: none; }
.defs { position: absolute; width: 0; height: 0; }
.app { height: 100vh; display: flex; flex-direction: column; }
.oscap { flex: none; height: 10px; border-bottom: 1px solid #9fb8c0; background: linear-gradient(90deg, #b8c8d0 0, #a9bdb9 6%, #7db0a4 9%, #8fa9d8 13%, #bfe8f4 14%, #bfe8f4 17%, #6fb49c 18%, #b3a6dc 20%, #4f9a78 22%, #8fb0e0 24%, #d8e0f4 26%, #2a6a58 28%, #101820 29%, #0d1420 31%, #070a10 60%, #101a28 88%, #2a3a54 94%, #9ab0c8 97%, #6a7f98 100%); }
.body { flex: 1; min-height: 0; display: flex; }
.work { flex: 1; min-width: 0; display: flex; flex-direction: column; }
.edge { width: 8px; flex: none; border-left: 1px solid #16282c; background: linear-gradient(90deg, transparent 5px, rgba(0,0,0,.5) 7px), linear-gradient(#8fd8e0 0, #9ff0f4 6%, #2c4a58 9%, #8fb8d8 14%, #6f9cc0 50%, #a8c8dc 80%, #3a4a60 92%, #b0c4d4 96%, #4a5c70 100%); }

.head { flex: none; height: 57px; display: flex; background: #9bdada; }
.menu { flex: 1; display: flex; align-items: center; gap: 18px; padding: 0 16px 0 6px; border: 2px solid #4f7878; border-left: 0; border-top-width: 3px; box-shadow: inset 0 2px #c8f4f4; font: bold 14px/20px "Liberation Serif", serif; }
.menu u { text-underline-offset: 4px; }
.help { margin-left: auto; }
.brand { width: 414px; display: flex; gap: 6px; padding: 3px 3px 0 5px; border: 3px solid; border-color: #4f7878 #c8f4f4 #c8f4f4 #4f7878; }
.logo { display: flex; align-items: center; font: italic bold 31px/40px "Liberation Sans", sans-serif; color: #000080; }
.prod { display: flex; flex-direction: column; align-items: center; font-family: "Liberation Serif", serif; white-space: nowrap; }
.prod strong { font-size: 24px; line-height: 26px; }
.prod em { font-size: 14px; font-weight: bold; line-height: 24px; }
.clock { font: italic bold 15px/15px "Liberation Mono", monospace; text-align: center; white-space: nowrap; padding-top: 2px; }

.main { flex: 1; min-height: 0; display: flex; }
.layers { width: 145px; flex: none; display: flex; flex-direction: column; padding: 3px 2px 3px 0; background: #56ccaa; font: bold 15px/18px "Liberation Mono", monospace; }
.jobbox { border: 1px solid #000; border-left: 0; height: 20px; margin-bottom: -1px; background: #9bdada; white-space: nowrap; }
.matrix { margin: 3px 0 4px; border: 1px solid #000; border-left: 0; padding: 2px; padding-left: 0; }
.matrix button { display: block; width: 100%; height: 21px; text-align: left; white-space: nowrap; background: #9bdada; border: 2px solid; border-color: #c8f4f4 #4f8580 #4f8580 #c8f4f4; border-left: 0; }
.lscroll { flex: 1; min-height: 0; display: flex; gap: 4px; }
.lwin { flex: 1; overflow: hidden; padding-top: 2px; border: solid; border-width: 4px 4px 3px 0; border-color: #2f7562 #b5f0e0 #b5f0e0; background: linear-gradient(90deg, transparent 116px, #000 116px, #000 117px, transparent 117px); }
.lwin ul { list-style: none; margin: 0 0 3px; padding: 2px 0 0; width: 114px; background: #000; }
.lwin label { display: flex; gap: 2px; height: 16px; font-size: 12px; line-height: 14px; white-space: nowrap; }
.lwin input { appearance: none; flex: none; width: 13px; height: 14px; background: #fff; border: 2px solid #fff; border-left-width: 1px; box-shadow: inset 0 0 0 2px #000; }
.lwin input.on { border-color: #0a1aa8; box-shadow: inset 0 0 0 2px #0a1060; }
.lwin i { width: 14px; height: 14px; flex: none; }
.lwin b { flex: 1; min-width: 0; height: 14px; margin-right: 2px; padding-left: 2px; display: flex; justify-content: space-between; align-items: center; background: #9bdada; overflow: hidden; }
.lwin b svg { width: 8px; height: 8px; margin-right: 2px; flex: none; }
.lwin b .mk { width: 6px; height: 6px; }
.lwin .w { background: #fff; } .lwin .g { background: #08a47c; } .lwin .o { background: #ffc44f; } .lwin .s { background: #9ab4c0; } .lwin .l { background: #d8d8d8; }
.red { background: #f00; } .blue { background: #0010ff; } .lime { background: #00e810; }
.lbar { width: 15px; display: flex; flex-direction: column; align-items: center; padding: 1px 0; border: 2px solid; border-color: #2f7562 #b5f0e0 #b5f0e0 #2f7562; background: #44ae96; }
.lthumb { width: 100%; height: 706px; flex: 0 1 706px; margin: 1px 0 auto; background: #56ccaa; border: 2px solid; border-color: #b5f0e0 #2f7562 #2f7562 #a5e8d4; }
.selected { height: 20px; margin-top: 3px; border: 1px solid #000; border-left: 0; background: #ffc44f; font-size: 12px; white-space: nowrap; }

.canvas { flex: 1; min-width: 0; position: relative; overflow: hidden; background: #000; }
.pcb { display: block; width: 100%; height: 100%; shape-rendering: crispEdges; }

.pop { position: absolute; left: 102px; top: 312px; width: 506px; height: 387px; display: flex; flex-direction: column; padding: 0 5px 5px; border: 1px solid #9a9a9a; border-radius: 7px; background: linear-gradient(90deg, transparent 41%, #0a18c8 43%, #1030e0 46%, transparent 47%, #6a0c10 48%, transparent 50%) 0 0 / 100% 27px no-repeat, linear-gradient(90deg, #3c3c3c 0, #0c0f10 35%, #07090a 55%, #2c2c2e 75%, #303032) 0 0 / 100% 114px no-repeat, #0a0c0e; }
.ptitle { height: 26px; flex: none; display: flex; align-items: center; gap: 6px; }
.ptitle span { font-size: 12px; line-height: 16px; border-radius: 8px; background: rgba(125,125,125,.8); box-shadow: 0 0 6px 3px rgba(125,125,125,.6); color: #000; }
.ptitle button { margin-left: auto; align-self: flex-start; width: 48px; height: 19px; border: 1px solid #8a8a8a; border-top: 0; border-radius: 0 0 4px 4px; }
.pin { flex: 1; min-height: 0; display: flex; flex-direction: column; gap: 1px; padding: 1px; border: 1px solid #9a9a9a; background: #000; }
.prow { flex: 1; min-height: 0; display: flex; gap: 2px; }
.pview { flex: 1; border: 3px solid; border-color: #2f6a5a #b5f0e0 #b5f0e0 #2f6a5a; }
.pview svg { display: block; width: 100%; height: 100%; }
.ptools { width: 35px; display: flex; flex-direction: column; padding-top: 2px; background: #56ccaa; }
.ptools button { height: 35px; flex: none; padding: 1px; border-bottom: 2px solid #000; display: flex; justify-content: center; align-items: center; }
.ptools svg { width: 31px; height: 31px; padding: 3px; background: #9bdada; border: 2px solid; border-color: #c8f4f4 #4f8580 #4f8580 #c8f4f4; outline: 1px solid #000; outline-offset: -6px; }
.pclose { height: 28px; background: #9bdada; border: 3px solid; border-color: #c8f4f4 #4f8580 #4f8580 #c8f4f4; font: bold 15px/20px "Liberation Mono", monospace; }

.xl { position: absolute; left: 803px; top: 31px; width: 787px; height: 835px; display: flex; flex-direction: column; padding: 0 6px 5px; border: 1px solid #b4b8bc; border-radius: 7px; background: linear-gradient(90deg, #55585c 0, #0b0e12 12%, #05070a 30%, #0b1016 60%, #2c3034 85%, #76797c 100%) 0 0 / 100% 28px no-repeat, linear-gradient(#4a4a4a 0, #aaa 225px, #0c1016 226px); }
.xtitle { height: 27px; flex: none; display: flex; align-items: center; color: #000; }
.xtitle h1 { margin: 0 auto; font-size: 12px; font-weight: 400; line-height: 16px; border-radius: 8px; background: rgba(140,145,148,.75); box-shadow: 0 0 6px 4px rgba(140,145,148,.6); }
.qat { width: 76px; height: 21px; display: flex; justify-content: flex-end; align-items: center; padding-right: 11px; border-radius: 0 11px 11px 0; background: linear-gradient(90deg, transparent 40px, #40444a 42px); }
.qdd { margin-left: 9px; }
.wbtn { display: flex; align-self: flex-start; height: 18px; border: 1px solid #c0c0c0; border-top: 0; border-radius: 0 0 5px 5px; overflow: hidden; }
.wbtn button { width: 27px; display: flex; align-items: center; justify-content: center; background: linear-gradient(#b0b0b0, #6a6a6a 45%, #3a3a3a 50%, #606060); border-right: 1px solid #ccc; }
.wbtn .x { width: 47px; border: 0; background: linear-gradient(#e0a090, #c85440 45%, #a82410 50%, #d05830); }
.orb { position: absolute; left: 10px; top: 7px; width: 36px; height: 36px; border-radius: 50%; display: grid; place-items: center; background: radial-gradient(circle at 50% 70%, #fff, #dde1e8 60%, #98a0ac); box-shadow: 0 0 2px #222; }
.xin { flex: 1; min-height: 0; display: flex; flex-direction: column; background: #bfdbff; color: #15428b; }
.tabs { height: 27px; flex: none; display: flex; align-items: flex-end; padding-left: 47px; }
.tabs a { padding: 0 14px 0 15px; line-height: 25px; }
.tabs .act { padding: 0 12px; margin-right: 2px; background: linear-gradient(#fff, #dfeafa); border-radius: 4px 4px 0 0; }
.mdi { margin-left: auto; display: flex; align-items: center; gap: 13px; padding: 0 6px 6px 0; }
.ribbon { flex: none; height: 108px; margin: 0 1px 2px; padding: 2px 20px 2px 2px; display: grid; grid-template-columns: 72fr 151fr 112fr 89fr 116fr 68fr 124fr; gap: 3px; border: 1px solid #8db2e3; border-top-color: #e8f2ff; border-radius: 4px; background: linear-gradient(#dbe6f5 0, #c7d8ed 22%, #d9e6f5 100%); }
.grp { min-width: 0; display: flex; flex-direction: column; border: 1px solid #a9c3e2; border-radius: 3px; overflow: hidden; }
.gb { flex: 1; min-height: 0; padding: 3px; }
.gl { height: 20px; line-height: 20px; text-align: center; background: #c1d8f1; color: #3e6aaa; display: flex; justify-content: center; position: relative; }
.lx { position: absolute; right: 5px; top: 4px; width: 7px; height: 7px; border: 1px solid #6a8ab8; border-right-color: #fff; border-bottom-color: #fff; background: linear-gradient(135deg, transparent 50%, #6a8ab8 50%); }
.gb svg { width: 16px; height: 16px; flex: none; }
.gb .dd { width: 5px; height: 3px; margin-left: 4px; }
.clip, .edit { display: flex; gap: 6px; }
.big { line-height: 17px; text-align: center; white-space: nowrap; }
.clip .big { width: 44px; display: flex; flex-direction: column; align-items: center; gap: 3px; }
.gb .big > svg:first-child { width: 28px; height: 32px; }
.edit .big > svg:first-child { display: block; margin: 0 auto; }
.edit .big .dd { vertical-align: middle; }
.col { display: flex; flex-direction: column; gap: 6px; padding-top: 3px; }
.rows { display: flex; flex-direction: column; gap: 3px; }
.r { display: flex; gap: 4px; height: 21px; }
.r:first-child { gap: 0; height: 25px; }
.r:first-child .bs { height: 21px; margin-right: 4px; }
.r select { appearance: none; height: 25px; padding-left: 2px; border: 1px solid #b4cbe8; background: linear-gradient(#5a7fb5, #5a7fb5) right 7px center / 5px 2px no-repeat, #eaf2fb; color: #000; font-size: 12px; }
.f1 { flex: 2; min-width: 0; } .f2 { flex: 1; min-width: 0; }
.bs { display: flex; border: 1px solid #93afd6; border-radius: 3px; overflow: hidden; }
.bs button, .pl { display: flex; align-items: center; padding: 0 3px; }
.bs button + button { border-left: 1px solid #b7cde8; }
.hot { background: linear-gradient(#fddfae, #fdb765 45%, #fed67f); }
.t { font: bold 15px/18px "Liberation Serif", serif; color: #1c2433; min-width: 15px; text-align: center; }
i.t { font-style: italic; } .t.b { font-size: 12px; }
.gb .sup { width: 5px; height: 3px; align-self: flex-start; margin-top: 3px; }
.sm { color: #1c2433; padding: 0 2px; }
.gb .wen { width: 18px; height: 18px; }
.dec { font: bold 9px/9px "Liberation Sans", sans-serif; color: #223; text-align: right; min-width: 15px; }
.dec i { color: #2a62d8; font-style: normal; font-size: 8px; }
.list { display: flex; flex-direction: column; }
.gb.list { padding-top: 1px; }
.list button { display: flex; align-items: center; gap: 3px; height: 22px; padding-left: 3px; white-space: nowrap; }
.list .dd { margin-left: 2px; }
.edit { padding-top: 1px; }
.edit .list button { padding-left: 2px; }

.fbar { flex: none; height: 20px; display: flex; align-items: center; background: #fff; border: 1px solid #6f9bc8; border-width: 1px 0; color: #000; }
.nbox { width: 140px; text-align: center; font: 300 16px/18px "Noto Sans Mono CJK SC", monospace; }
.ndd { margin-left: 8px; }
.fx { width: 77px; height: 18px; margin-left: 9px; display: flex; align-items: center; justify-content: space-between; padding: 0 5px 0 4px; border-radius: 9px 0 0 9px; border-right: 1px solid #6f8fc0; background: linear-gradient(#e8f1fc, #b8d0ee); color: #445; }
.fx i { width: 9px; height: 9px; border-radius: 50%; background: #b8c4d4; box-shadow: inset -1px -1px #fff; }
.fx em { font: italic bold 15px/16px "Liberation Serif", serif; }
.fx sub { font-size: 11px; vertical-align: baseline; }
.fin { flex: 1; min-width: 0; height: 18px; border: 0; padding-left: 12px; font: 300 15px/18px "Noto Sans CJK SC", sans-serif; }
.fexp { width: 15px; height: 18px; border-left: 1px solid #6f8fc0; background: linear-gradient(#eaf2fc, #b8cdea); display: grid; place-items: center; }

.sheet { flex: 1; min-height: 0; display: flex; margin-top: 3px; overflow: hidden; border-top: 1px solid #7a98c0; }
.grid { flex: 1; min-width: 0; overflow: hidden; background: #fff; color: #000; }
table { width: 100%; table-layout: fixed; border-spacing: 0; font: 300 16px/18px "Noto Sans Mono CJK SC", "Noto Sans CJK SC", monospace; }
.c0 { width: 34px; } .c1 { width: 149px; } .c3 { width: 26px; }
th, td { padding: 0; height: 19px; overflow: hidden; white-space: nowrap; }
th { font-weight: 400; color: #27413e; background: #e4ecf7; border-right: 1px solid #9eb6ce; border-bottom: 1px solid #9eb6ce; font-family: "Liberation Serif", serif; }
thead th { height: 19px; background: linear-gradient(#f6f9fc, #d3dbe9); }
thead .sel { background: linear-gradient(#f9d99f, #f1c15f); border-color: #f29536; }
thead .cor { background: linear-gradient(135deg, transparent 50%, #e4ecf7 50%) 20px 4px / 10px 12px no-repeat, #a9c4e9; }
td { padding-left: 2px; border-bottom: 1px solid #000; vertical-align: bottom; }
td:nth-child(2) { border-right: 2px solid #000; }
td:nth-child(3) { border-right: 2px solid #000; }
td:nth-child(4) { border-color: #d0d7e5; }
td.y { background: #ff0; }
td.ck { padding-left: 3px; }
.cur th { background: #ffd58d; border-color: #f29536; }
.cur td:nth-child(3) { box-shadow: inset 0 1px #000, inset 0 -2px #fff, inset 0 -3px #000; }
.tall th, .tall td { height: 27px; }
.tall th { vertical-align: bottom; }
.tall td { vertical-align: middle; }
.tall .big1 { padding-left: 5px; font: bold 22px/24px "Liberation Serif", "Noto Sans CJK SC", serif; color: #f00; }
.last td, .last th { height: 60px; vertical-align: top; line-height: 19px; }
.last td:nth-child(2) { padding-top: 8px; }
.vs { width: 16px; display: flex; flex-direction: column; align-items: center; background: linear-gradient(90deg, #7a9ac8, #9ab8e0); }
.split { width: 14px; height: 7px; border: 1px solid #6f8fc0; background: #fff; }
.vs svg { margin-top: 9px; flex: none; }
.vs .vt { width: 15px; height: 122px; margin: 159px 0 auto; border: 1px solid #4a5f88; border-radius: 2px; background: repeating-linear-gradient(#6a7a98 0 1px, transparent 1px 3px) 4px 54px / 6px 12px no-repeat, linear-gradient(90deg, #eef3fa, #b8c6dc); }
.vs svg:last-child { margin: 0 0 6px; }
.stabs { flex: none; height: 17px; display: flex; background: linear-gradient(#8db0dc, #a8c4e6); border-bottom: 1px solid #6f8fc0; }
.nav { width: 63px; display: flex; align-items: center; justify-content: space-around; background: #c4daf5; border-right: 1px solid #8aa8d0; }
.stabs svg:not([width]) { width: 8px; height: 8px; fill: #2a4a8a; }
.st { padding: 0 9px; font-size: 14px; line-height: 17px; background: #fff; }
.nt { width: 42px; display: grid; place-items: center; background: linear-gradient(115deg, transparent 12%, #e4effc 13%, #cfe0f5 82%, transparent 83%); }
.hs { width: 303px; margin: 0 16px 0 auto; display: flex; align-items: center; gap: 8px; background: #7396c8; }
.hh { width: 7px; height: 14px; border: 1px solid #8aa8d0; background: #fff; }
.ht { width: 188px; height: 14px; margin-right: auto; display: grid; place-items: center; border: 1px solid #6a7f9f; border-radius: 2px; background: linear-gradient(#eef2f8, #b4c0d0); }
.ht i { width: 8px; height: 7px; background: repeating-linear-gradient(90deg, #6a7a98 0 1px, transparent 1px 2px); }
.status { flex: none; height: 22px; display: flex; justify-content: space-between; background: linear-gradient(#d8e8fb, #c0daf9 40%, #a4c4f0 45%, #c4dcf8); }
.rdy { width: 41px; text-align: center; line-height: 21px; border-right: 1px solid #8aa8d0; }
.sr { display: flex; align-items: center; gap: 8px; padding: 0 2px 0 5px; border-left: 1px solid #5a82c0; background: linear-gradient(#b8d2f4, #7da4de 45%, #6a94d4 50%, #9cbcec); }
.vb { display: flex; border: 1px solid #7a98c8; border-radius: 2px; }
.vb button { width: 18px; height: 16px; display: grid; place-items: center; }
.vb svg { width: 14px; height: 12px; }
.zb { width: 16px; height: 16px; margin: 0 -4px; }
.sr input { appearance: none; width: 108px; height: 14px; background: linear-gradient(#c8dcf6, #c8dcf6) center / 100% 1px no-repeat; }
.sr input::-webkit-slider-thumb { appearance: none; width: 9px; height: 13px; border: 1px solid #4a6090; border-radius: 1px 1px 5px 5px; background: #e4ecf8; }
.grip { width: 12px; height: 12px; align-self: flex-end; margin-left: 2px; }
.mark { position: absolute; left: 158px; top: 377px; width: 187px; height: 23px; border: 2px solid #c01c1c; box-shadow: 2px 2px 4px rgba(0,0,0,.5), inset 2px 2px 4px rgba(0,0,0,.3); }

.tools { width: 163px; flex: none; display: flex; flex-direction: column; background: #56ccaa; }
.tg { display: grid; grid-template-columns: repeat(4, 1fr); gap: 2px; padding: 1px; background: #000; border: 1px solid; border-color: #2f6a5a #b5f0e0 #b5f0e0 #2f6a5a; }
.grey { margin-top: 2px; border-color: #555; }
.tg button { height: 38px; display: grid; place-items: center; border: 3px solid; }
.teal button { background: #9bdada; border-color: #c8f4f4 #4f8580 #4f8580 #c8f4f4; }
.grey button { background: #d0d0d0; border-color: #eee #7c7c7c #7c7c7c #eee; }
.grey .wh { background: #fff; border-color: #fff #8a8a8a #8a8a8a #fff; }
.grey .or { background: #ffc44f; border-color: #ffe4a4 #a08448 #a08448 #ffe4a4; }
.tg svg { width: 30px; height: 30px; outline: 1px solid #000; outline-offset: -1px; }
.tg .rd svg { border: 1px solid #000; outline: 2px solid #c81818; outline-offset: 0; }
.mini { flex: 1; min-height: 0; margin: 3px 2px 2px 1px; background: #000; }
.mini svg { display: block; width: 100%; height: 100%; }
.xy { height: 46px; flex: none; padding: 6px 3px; border: 2px solid; border-color: #2f6a5a #b5f0e0 #b5f0e0 #2f6a5a; font: bold 15px/15px "Liberation Mono", monospace; white-space: nowrap; }

.foot { flex: none; height: 28px; display: flex; align-items: stretch; border-top: 1px solid #000; background: #ffffcc; font: bold 12px/29px "Liberation Mono", monospace; overflow: hidden; }
.fb { width: 28px; display: grid; place-items: center; border: 3px solid; border-color: #fffff0 #a8a880 #a8a880 #fffff0; border-right-width: 2px; outline: 1px solid #000; }
.fb:first-child { width: 24px; }
.fb.act { background: #e0e8b8; border-color: #7cae9c; width: 30px; }
.foot label { padding: 0 5px 0 5px; font-family: "Liberation Mono", monospace; font-size: 12px; }
.foot input { width: 170px; margin-left: 6px; border: 3px solid; border-color: #8a8a70 #fffff0 #fffff0 #8a8a70; background: #ffffcc; }
.bang { width: 24px; margin: 0 6px; padding: 1px; font-size: 15px; line-height: 18px; }
.bang span { display: block; width: 16px; border: 1px solid #000; }
.unit { margin-left: auto; width: 80px; padding: 2px 3px 0 6px; background: #56ccaa; border-left: 2px solid #000; }
.unit button { width: 100%; height: 28px; display: flex; align-items: center; gap: 9px; padding: 0 6px; border: 2px solid; border-color: #b5f0e0 #2f7562 #2f7562 #b5f0e0; font-size: 15px; }
.unit i { width: 12px; height: 7px; border: 2px solid; border-color: #b5f0e0 #2f7562 #2f7562 #b5f0e0; }
```
